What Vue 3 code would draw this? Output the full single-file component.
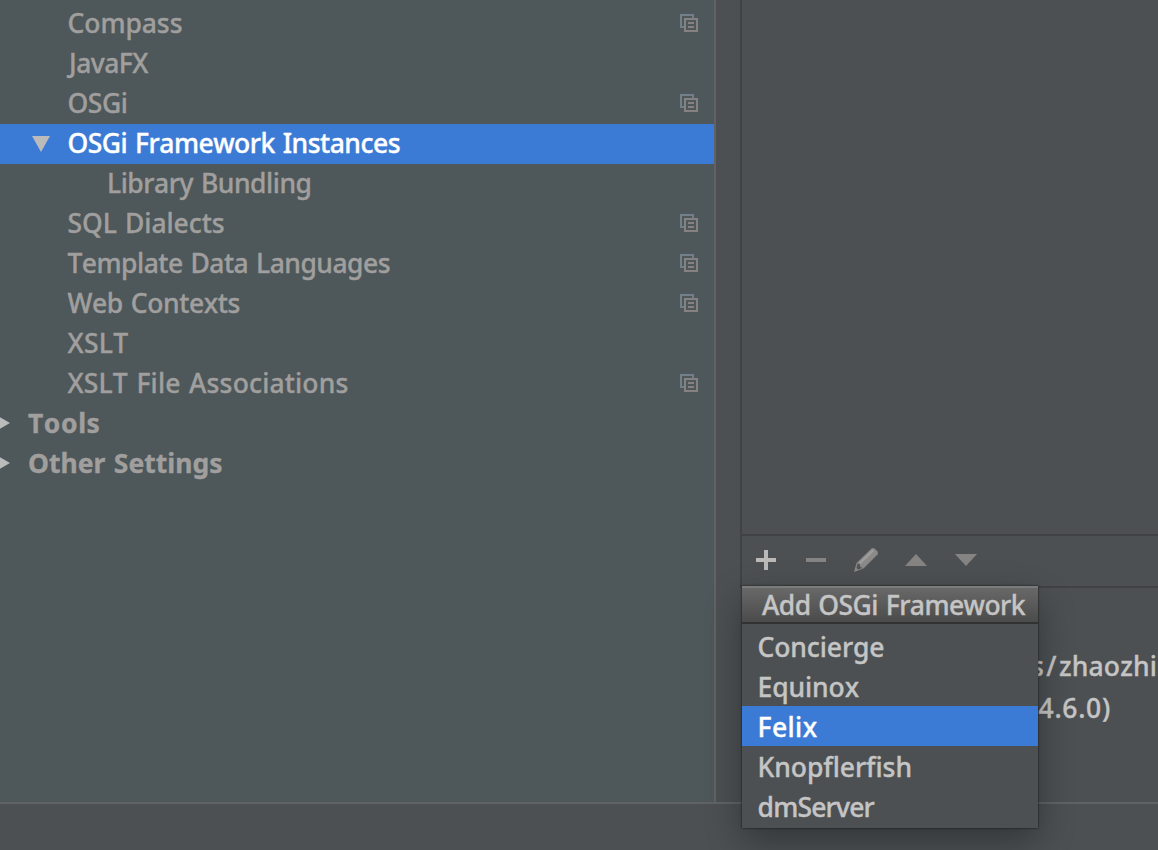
<script setup>
const rows = [
  { text: 'Compass', w: 115, copy: true },
  { text: 'JavaFX', w: 79, kind: 'java' },
  { text: 'OSGi', w: 60, copy: true },
  { text: 'OSGi Framework Instances', w: 332.5, kind: 'selected', arrow: 'down' },
  { text: 'Library Bundling', w: 204.5, kind: 'nested' },
  { text: 'SQL Dialects', w: 157, copy: true },
  { text: 'Template Data Languages', w: 322.5, copy: true },
  { text: 'Web Contexts', w: 172.5, copy: true },
  { text: 'XSLT', w: 61 },
  { text: 'XSLT File Associations', w: 281, copy: true },
  { text: 'Tools', w: 72.5, kind: 'top', arrow: 'right' },
  { text: 'Other Settings', w: 194.5, kind: 'top', arrow: 'right' },
]
const frameworks = [
  { text: 'Concierge', w: 127 },
  { text: 'Equinox', w: 101.5 },
  { text: 'Felix', w: 60 },
  { text: 'Knopflerfish', w: 154.5 },
  { text: 'dmServer', w: 116.5 },
]
const active = 'Felix'
// Tracks a label so that its advance width equals the given value.
const vFit = {
  mounted(el, { value }) {
    const n = el.textContent.length
    el.style.letterSpacing = (value - el.getBoundingClientRect().width) / n + 'px'
  },
}
</script>

<template>
  <div class="window">
    <div class="main">
      <div class="tree">
        <div v-for="r in rows" :key="r.text" class="row" :class="r.kind">
          <svg v-if="r.arrow === 'down'" class="arrow" width="18" height="16"><path d="M0 0H18L9 16Z" /></svg>
          <svg v-if="r.arrow === 'right'" class="arrow-right" width="10" height="14"><path d="M0 1.2L10 7L0 12.8Z" /></svg>
          <span v-fit="r.w" class="label">{{ r.text }}</span>
          <svg v-if="r.copy" class="copy" width="18" height="18" fill="none" stroke-width="2">
            <path d="M13 4V1H1V13H4" stroke="#728089" />
            <path d="M5 5H17V17H5ZM8 9H14M8 13H14" stroke="#868281" />
          </svg>
        </div>
      </div>
      <div class="content">
        <div class="list"></div>
        <div class="toolbar">
          <svg width="20" height="20"><path d="M8 0H12V8H20V12H12V20H8V12H0V8H8Z" fill="#bbb9b8" /></svg>
          <svg width="20" height="20"><path d="M0 8H20V12H0Z" fill="#868483" /></svg>
          <svg class="pencil" width="26" height="26">
            <path d="M1 25L3.500 16L18.500 1.500Q20 0.500 21.500 1.500L24.500 4.500Q25.500 6 24.500 7.500L10.500 21.500Z" fill="#8b8a89" />
            <path d="M6 15.500L19.500 2.500L21 4L7.500 17Z" fill="#a09f9e" />
            <path d="M4.500 16.500L3.500 21L5 22.500L9.500 21L7.500 20L6.500 17Z" fill="#515557" />
          </svg>
          <svg class="tri" width="22" height="12"><path d="M0 12L11 0L22 12Z" fill="#868483" /></svg>
          <svg class="tri" width="22" height="12"><path d="M0 0H22L11 12Z" fill="#868483" /></svg>
        </div>
        <div class="details">
          <div class="line path"><span v-fit="28">s/</span><span v-fit="98">zhaozhi</span></div>
          <div class="line version"><span v-fit="72.5">4.6.0)</span></div>
        </div>
      </div>
    </div>
    <div class="footer"></div>
    <div class="popup">
      <div class="popup-title"><span v-fit="263">Add OSGi Framework</span></div>
      <div class="popup-list">
        <div v-for="f in frameworks" :key="f.text" class="option" :class="{ active: f.text === active }">
          <span v-fit="f.w">{{ f.text }}</span>
        </div>
      </div>
    </div>
  </div>
</template>

<style>
body { overflow: hidden; background: #4c5052; }
</style>

<style scoped>
.window {
  position: relative;
  display: flex;
  flex-direction: column;
  width: 1158px;
  height: 850px;
  overflow: hidden;
  box-sizing: border-box;
  background: #4c5052;
  font-family: "Noto Sans", "Open Sans", sans-serif;
  font-size: 26.5px;
  font-weight: 500;
  font-kerning: none;
  word-spacing: 1.5px;
  -webkit-text-stroke: 0.35px currentColor;
  white-space: nowrap;
  color: #c5c5c5;
}
.main { display: flex; height: 802px; }
.tree {
  width: 714px;
  flex: none;
  padding-top: 4px;
  background: #4e5759;
  border-right: 2px solid #606365;
  height: 798px;
  color: #a09f9e;
}
.row {
  display: flex;
  height: 40px;
  box-sizing: border-box;
  padding: 0 16px 0 67.5px;
  line-height: 38px;
}
.row.nested { padding-left: 107px; }
.row.java { padding-left: 69px; }
.row.top { padding-left: 0; font-weight: 700; }
.row.selected { background: #3c7bd5; color: #fff; padding-left: 32px; }
.arrow { flex: none; margin: 12px 17.5px 0 0; fill: #bbb; }
.arrow-right { flex: none; margin: 12px 18px 0 0; fill: #bbb; }
.copy { flex: none; margin: 10px 0 0 auto; }
.content {
  flex: 1;
  min-width: 0;
  margin-left: 24px;
}
.list { height: 534px; border-left: 2px solid #414243; }
.toolbar {
  display: flex;
  align-items: center;
  height: 50px;
  box-sizing: content-box;
  border: solid #414243;
  border-width: 2px 0 2px 2px;
  padding-left: 14px;
}
.toolbar svg { margin: -2px 30px 0 0; flex: none; }
.toolbar .pencil { margin: -2px 26px 0 -3px; }
.toolbar .tri { margin-right: 28px; }
.details { padding-top: 60px; }
.line { height: 42px; line-height: 36px; }
.path { padding-left: 291px; }
.version { padding-left: 298.5px; }
.footer { height: 46px; border-top: 2px solid #606365; }
.popup {
  position: absolute;
  left: 742px;
  top: 586px;
  width: 296px;
  height: 242px;
  background: #4c5052;
  box-shadow: 0 0 2px rgba(0, 0, 0, 0.75), 0 14px 34px rgba(0, 0, 0, 0.32);
}
.popup-title {
  height: 36px;
  box-sizing: border-box;
  border-top: 2px solid #7b7b7b;
  padding-left: 20px;
  line-height: 34px;
  background: linear-gradient(#686868, #4b4b4b);
}
.popup-list { border-top: 2px solid #303233; padding-top: 2px; }
.option { height: 40px; line-height: 42px; padding-left: 15.5px; }
.option.active { background: #3c7bd5; color: #fff; }
</style>
